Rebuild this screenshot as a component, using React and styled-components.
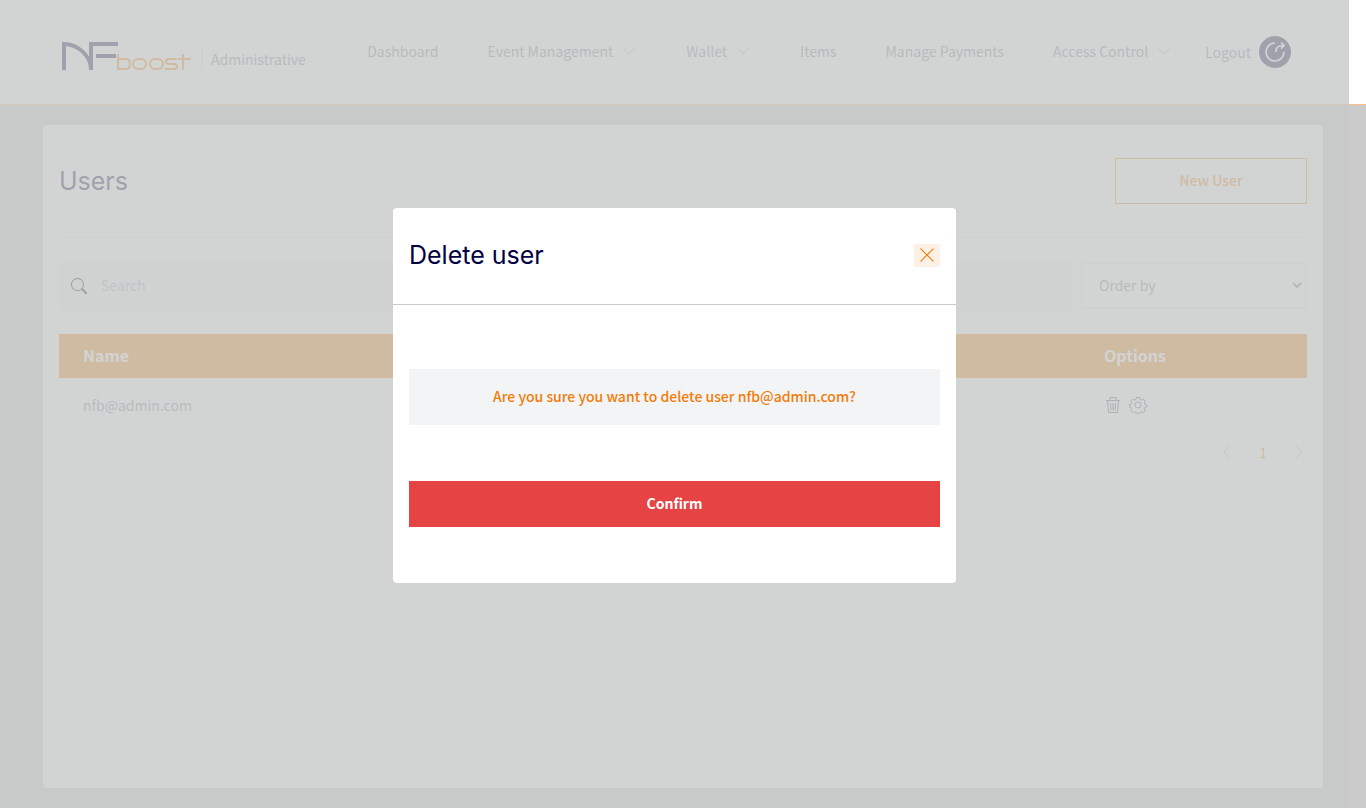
import React from "react";
import styled, { createGlobalStyle, css } from "styled-components";
import { BsSearch, BsChevronDown, BsChevronLeft, BsChevronRight, BsXLg } from "react-icons/bs";

const navy = "#000042";
const orange = "#f17c0a";
const body = '"Noto Sans CJK SC", "Noto Sans", sans-serif';
const display = 'Inter, "Liberation Sans", sans-serif';

const GlobalStyle = createGlobalStyle`
  *, *::before, *::after { box-sizing: border-box; }
  body { margin: 0; background: #cccbcb; font-family: ${body}; font-size: 14px; line-height: 20px; font-weight: 400; color: #6f7d90; }
  button, input, select { font: inherit; }
  a { color: inherit; text-decoration: none; }
`;

const Page = styled.div`
  position: relative;
  min-height: 100vh;
  display: flex;
  flex-direction: column;
`;

const Header = styled.header`
  background: #fff;
  border-bottom: 1px solid #fbbf7f;
  height: 105px;
  padding: 0 75px 0 62px;
  display: flex;
  align-items: center;
  justify-content: space-between;
`;

const Brand = styled.a`
  display: flex;
  align-items: flex-end;
  gap: 10px;
  padding-top: 8px;
  svg { display: block; }
`;

const BrandText = styled.span`
  border-left: 2px solid #e9ecef;
  padding-left: 8px;
  line-height: 24px;
`;

const Nav = styled.nav`
  display: flex;
  align-items: center;
  gap: 49px;
`;

const NavLink = styled.a`
  display: flex;
  align-items: center;
  gap: 8px;
  padding-bottom: 2px;
  white-space: nowrap;
  svg { color: #b4bfcc; }
`;

const Logout = styled(NavLink)`
  margin-left: -16px;
  padding-bottom: 0;
  svg { display: block; }
`;

const Card = styled.main`
  flex: 1;
  width: calc(100% - 86px);
  max-width: 1280px;
  margin: 20px auto;
  padding: 33px 16px;
  background: #fff;
  border-radius: 4px;
`;

const titleText = css`
  margin: 0;
  font-family: ${display};
  font-size: 25px;
  line-height: 32px;
  font-weight: 400;
  color: ${navy};
`;

const PageTitle = styled.h1`${titleText}`;
const DialogTitle = styled.h2`${titleText}`;

const TitleRow = styled.div`
  display: flex;
  justify-content: space-between;
  align-items: center;
  padding-bottom: 33px;
  border-bottom: 1px solid #f4ead8;
`;

const OutlineButton = styled.button`
  width: 192px;
  height: 46px;
  padding: 0 0 2px;
  background: transparent;
  border: 1px solid ${orange};
  color: ${orange};
  font-weight: 500;
`;

const Filters = styled.div`
  display: flex;
  gap: 8px;
  margin: 24px 0;
`;

const SearchBox = styled.label`
  flex: 1;
  display: flex;
  align-items: center;
  gap: 14px;
  height: 48px;
  padding: 0 12px;
  background: #f3f4f6;
  border-radius: 4px;
  color: #000;
`;

const SearchInput = styled.input`
  flex: 1;
  border: 0;
  padding: 0 0 2px;
  background: transparent;
  outline: none;
  &::placeholder { color: #a6acb6; opacity: 1; }
`;

const OrderSelect = styled.select`
  width: 226px;
  height: 47px;
  padding: 0 0 2px 12px;
  border: 2px solid #eeeff2;
  border-radius: 4px;
  background: #fff;
  color: #6f7d90;
`;

const Table = styled.table`
  width: 100%;
  border-collapse: collapse;
  table-layout: fixed;
`;

const HeadCell = styled.th`
  height: 44px;
  padding: 0 24px 2px;
  background: ${orange};
  color: #fff;
  font-size: 16px;
  font-weight: 700;
  text-align: left;
  width: ${(p) => p.$width || "auto"};
`;

const Cell = styled.td`
  height: 54px;
  padding: 0 24px;
`;

const Actions = styled.div`
  display: flex;
  gap: 8px;
  padding-left: 1px;
`;

const IconButton = styled.button`
  display: flex;
  padding: 0;
  border: 0;
  background: transparent;
  color: ${(p) => p.$tone || "#475569"};
`;

const Pager = styled.nav`
  display: flex;
  justify-content: flex-end;
  align-items: center;
  gap: 24px;
  padding-top: 10px;
`;

const CurrentPage = styled.span`
  color: ${orange};
`;

const Overlay = styled.div`
  position: absolute;
  inset: 0 17px 0 0;
  display: flex;
  align-items: center;
  justify-content: center;
  padding-bottom: 17px;
  background: rgba(199, 201, 200, 0.8);
`;

const Dialog = styled.section`
  width: 563px;
  max-width: 100%;
  background: #fff;
  border-radius: 4px;
  overflow: hidden;
`;

const DialogHeader = styled.header`
  display: flex;
  align-items: center;
  justify-content: space-between;
  padding: 31px 16px 33px;
  border-bottom: 1px solid #c8cac9;
`;

const CloseButton = styled.button`
  display: grid;
  place-items: center;
  width: 26px;
  height: 23px;
  padding: 0;
  border: 0;
  border-radius: 2px;
  background: #fdf1e5;
  color: ${orange};
`;

const DialogBody = styled.div`
  padding: 64px 16px 56px;
  display: grid;
  gap: 56px;
`;

const Message = styled.p`
  margin: 0;
  padding: 17px 16px 19px;
  background: #f3f4f6;
  color: ${orange};
  font-weight: 500;
  text-align: center;
`;

const ConfirmButton = styled.button`
  height: 46px;
  padding: 0 0 2px;
  border: 0;
  background: #e64345;
  color: #fff;
  font-weight: 700;
`;

const Logo = () => (
  <svg width="129" height="29" viewBox="0 0 129 29" fill="none" role="img" aria-label="NFboost">
    <g stroke={navy} strokeWidth="4">
      <path d="M2 28V2C15 2 29 13 29 28V2H56" />
      <path d="M34 14H54" />
    </g>
    <g stroke={orange} strokeWidth="2">
      <path d="M56 12V27H64Q68 27 68 22T64 17H56" />
      <rect x="71" y="17" width="13" height="10" rx="5" />
      <rect x="88" y="17" width="13" height="10" rx="5" />
      <path d="M115 17H107Q104 17 104 19.500T107 22H112Q115 22 115 24.500T112 27H103M121 12V28M116 17H129" />
    </g>
  </svg>
);

const LogoutIcon = () => (
  <svg width="32" height="32" viewBox="0 0 32 32" fill="none" aria-hidden="true">
    <circle cx="16" cy="16" r="16" fill={navy} />
    <path d="M16 7A9 9 0 1 0 25 16M17 16C17 11 19 9.500 25 9.500M22 6.500L25 9.500L22 12.500" stroke="#fff" strokeWidth="1.700" />
  </svg>
);

const TrashIcon = () => (
  <svg width="16" height="18" viewBox="0 0 16 18" fill="none" stroke="currentColor" aria-hidden="true">
    <path d="M1 4.500H15M5 4V1.500H11V4M2.500 4.500L3.500 16.500H12.500L13.500 4.500M5.500 7L6 14.500M8 7V14.500M10.500 7L10 14.500" />
  </svg>
);

const GearIcon = () => (
  <svg width="18" height="18" viewBox="0 0 18 18" fill="none" stroke="currentColor" aria-hidden="true">
    <circle cx="9" cy="9" r="3" />
    <path d="M7.500 1.500h3l.5 2 1.500.6 1.800-1 2 2-1 1.800.6 1.500 1.600.5v2l-1.600.5-.6 1.500 1 1.800-2 2-1.800-1-1.500.6-.5 1.600h-3l-.5-1.600-1.500-.6-1.800 1-2-2 1-1.800-.6-1.500-1.600-.5v-2l1.600-.5.6-1.500-1-1.800 2-2 1.800 1 1.500-.6z" />
  </svg>
);

const links = [
  ["Dashboard"], ["Event Management", true], ["Wallet", true],
  ["Items"], ["Manage Payments"], ["Access Control", true],
];

export default function App() {
  return (
    <Page>
      <GlobalStyle />
      <Header>
        <Brand href="#"><Logo /><BrandText>Administrative</BrandText></Brand>
        <Nav>
          {links.map(([label, menu]) => (
            <NavLink href="#" key={label}>{label}{menu && <BsChevronDown size={16} />}</NavLink>
          ))}
          <Logout href="#">Logout<LogoutIcon /></Logout>
        </Nav>
      </Header>
      <Card>
        <TitleRow>
          <PageTitle>Users</PageTitle>
          <OutlineButton>New User</OutlineButton>
        </TitleRow>
        <Filters>
          <SearchBox>
            <BsSearch size={16} />
            <SearchInput type="search" placeholder="Search" aria-label="Search" />
          </SearchBox>
          <OrderSelect aria-label="Order by"><option>Order by</option></OrderSelect>
        </Filters>
        <Table>
          <thead>
            <tr><HeadCell>Name</HeadCell><HeadCell $width="227px">Options</HeadCell></tr>
          </thead>
          <tbody>
            <tr>
              <Cell>nfb@admin.com</Cell>
              <Cell>
                <Actions>
                  <IconButton aria-label="Delete"><TrashIcon /></IconButton>
                  <IconButton aria-label="Settings"><GearIcon /></IconButton>
                </Actions>
              </Cell>
            </tr>
          </tbody>
        </Table>
        <Pager aria-label="Pagination">
          <IconButton $tone="#b4bfcc" aria-label="Previous page"><BsChevronLeft size={16} /></IconButton>
          <CurrentPage>1</CurrentPage>
          <IconButton $tone="#b4bfcc" aria-label="Next page"><BsChevronRight size={16} /></IconButton>
        </Pager>
      </Card>
      <Overlay>
        <Dialog role="dialog" aria-modal="true" aria-labelledby="dialog-title">
          <DialogHeader>
            <DialogTitle id="dialog-title">Delete user</DialogTitle>
            <CloseButton aria-label="Close"><BsXLg size={18} /></CloseButton>
          </DialogHeader>
          <DialogBody>
            <Message>Are you sure you want to delete user nfb@admin.com?</Message>
            <ConfirmButton>Confirm</ConfirmButton>
          </DialogBody>
        </Dialog>
      </Overlay>
    </Page>
  );
}
